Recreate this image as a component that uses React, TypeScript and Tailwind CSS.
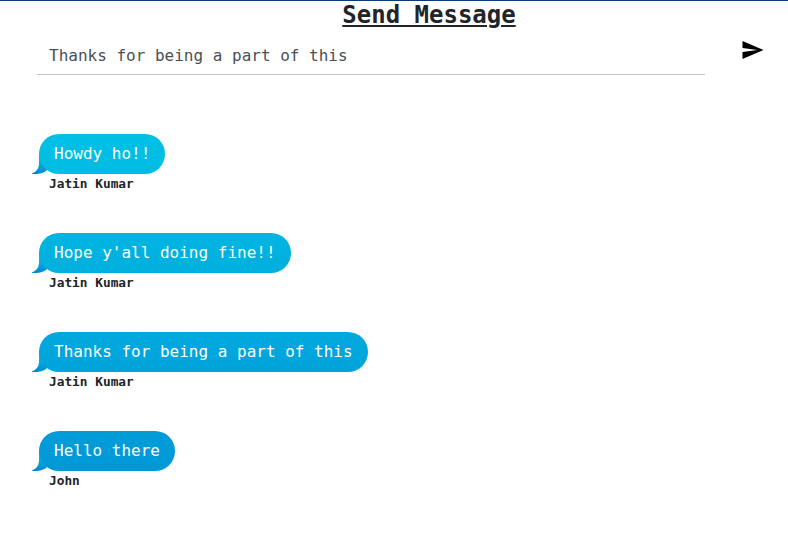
const messages = [
  { text: "Howdy ho!!", author: "Jatin Kumar" },
  { text: "Hope y'all doing fine!!", author: "Jatin Kumar" },
  { text: "Thanks for being a part of this", author: "Jatin Kumar" },
  { text: "Hello there", author: "John" },
];

export default function App() {
  return (
    <main className="h-[549px] w-full overflow-hidden border-t border-[#0b3c6f] bg-white font-['DejaVu_Sans_Mono',monospace] text-[#212529]">
      <h1 className="pl-[70px] text-center text-2xl leading-[29px] font-bold underline">Send Message</h1>
      <form className="flex pl-[37px]">
        <div className="flex h-[45px] w-[668px] items-center border-b border-[#c6c6c6] pt-2 pl-3 text-base text-[#495057]">
          Thanks for being a part of this
        </div>
        <button type="button" aria-label="Send" className="mt-2 ml-[35px] h-6 w-6">
          <svg viewBox="0 0 24 24" className="h-6 w-6 fill-black">
            <path d="M2.5 21 23.5 12 2.5 3v7l15 2-15 2z" />
          </svg>
        </button>
      </form>
      <section className="mt-[59px] flex flex-col gap-10 pl-[39px]">
        {messages.map((message) => (
          <article key={message.text} className="isolate flex h-[59px] flex-col items-start">
            <div className="relative h-10 rounded-[20px] bg-[linear-gradient(to_bottom,#00d0ea_0%,#0085d1_100%)] bg-fixed bg-[length:100%_630px] px-[15px] text-base leading-[39px] whitespace-nowrap text-white before:absolute before:bottom-0 before:-left-[7px] before:-z-20 before:h-5 before:w-5 before:rounded-br-[15px] before:bg-[linear-gradient(to_bottom,#00d0ea_0%,#0085d1_100%)] after:absolute after:bottom-0 after:-left-[10px] after:-z-10 after:h-5 after:w-[10px] after:rounded-br-[10px] after:bg-white">
              {message.text}
            </div>
            <div className="pl-[10px] text-[12.8px] leading-[19px] font-bold">{message.author}</div>
          </article>
        ))}
      </section>
    </main>
  );
}
